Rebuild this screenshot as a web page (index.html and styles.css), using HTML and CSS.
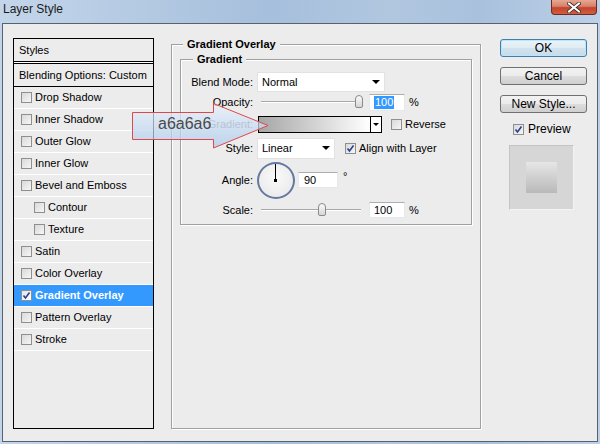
FILE: index.html
```html
<!DOCTYPE html>
<html lang="en">
<head>
    <meta charset="UTF-8">
    <title>Layer Style</title>
    <link rel="stylesheet" href="styles.css">
</head>
<body>
<div class="window">
    <div class="titlebar">
        <span class="title">Layer Style</span>
        <span class="close">
            <svg width="14" height="11" viewBox="0 0 14 11">
                <path d="M2,1.5 L12,9.5 M12,1.5 L2,9.5" stroke="#3a2a2a" stroke-width="3.6" stroke-linecap="square"/>
                <path d="M2,1.5 L12,9.5 M12,1.5 L2,9.5" stroke="#ffffff" stroke-width="2" stroke-linecap="square"/>
            </svg>
        </span>
    </div>

    <div class="client">
        <div class="styles-panel">
            <div class="panel-head">Styles</div>
            <div class="panel-blend">Blending Options: Custom</div>
            <div class="style-row"><span class="check"></span><span class="row-label">Drop Shadow</span></div>
            <div class="style-row"><span class="check"></span><span class="row-label">Inner Shadow</span></div>
            <div class="style-row"><span class="check"></span><span class="row-label">Outer Glow</span></div>
            <div class="style-row"><span class="check"></span><span class="row-label">Inner Glow</span></div>
            <div class="style-row"><span class="check"></span><span class="row-label">Bevel and Emboss</span></div>
            <div class="style-row sub"><span class="check"></span><span class="row-label">Contour</span></div>
            <div class="style-row sub"><span class="check"></span><span class="row-label">Texture</span></div>
            <div class="style-row"><span class="check"></span><span class="row-label">Satin</span></div>
            <div class="style-row"><span class="check"></span><span class="row-label">Color Overlay</span></div>
            <div class="style-row selected"><span class="check on"><svg width="9" height="9" viewBox="0 0 9 9"><path d="M1.5,4.5 L3.5,7 L7.5,1.5" fill="none" stroke="#2b3f8c" stroke-width="1.6"/></svg></span><span class="row-label">Gradient Overlay</span></div>
            <div class="style-row"><span class="check"></span><span class="row-label">Pattern Overlay</span></div>
            <div class="style-row"><span class="check"></span><span class="row-label">Stroke</span></div>
        </div>

        <div class="group group-outer">
            <div class="group-title">Gradient Overlay</div>
            <div class="group group-inner">
                <div class="group-title">Gradient</div>
                <div class="fields">
                    <div class="field field-blend">
                        <span class="field-label">Blend Mode:</span>
                        <div class="select select-blend">Normal<span class="caret"></span></div>
                    </div>
                    <div class="field field-slim">
                        <span class="field-label">Opacity:</span>
                        <div class="slider"><span class="thumb" style="left: 94px"></span></div>
                        <div class="textbox textbox-num"><span class="sel">100</span></div>
                        <span class="unit">%</span>
                    </div>
                    <div class="field field-wide">
                        <span class="field-label dim">Gradient:</span>
                        <div class="swatch"><span class="ramp"></span><span class="swatch-arrow"><span class="caret"></span></span></div>
                        <span class="check check-reverse"></span>
                        <span class="check-text">Reverse</span>
                    </div>
                    <div class="field field-wide">
                        <span class="field-label">Style:</span>
                        <div class="select select-style">Linear<span class="caret"></span></div>
                        <span class="check check-align"><svg width="9" height="9" viewBox="0 0 9 9"><path d="M1.5,4.5 L3.5,7 L7.5,1.5" fill="none" stroke="#2b3f8c" stroke-width="1.6"/></svg></span>
                        <span class="check-text">Align with Layer</span>
                    </div>
                    <div class="field field-angle">
                        <span class="field-label">Angle:</span>
                        <div class="dial"><span class="dial-hand"></span><span class="dial-dot"></span></div>
                        <div class="textbox textbox-angle">90</div>
                        <span class="degree">°</span>
                    </div>
                    <div class="field field-slim">
                        <span class="field-label">Scale:</span>
                        <div class="slider"><span class="thumb" style="left: 57px"></span></div>
                        <div class="textbox textbox-num">100</div>
                        <span class="unit">%</span>
                    </div>
                </div>
            </div>
        </div>

        <div class="actions">
            <button class="btn btn-default">OK</button>
            <button class="btn">Cancel</button>
            <button class="btn">New Style...</button>
            <div class="preview-toggle">
                <span class="check"><svg width="9" height="9" viewBox="0 0 9 9"><path d="M1.5,4.5 L3.5,7 L7.5,1.5" fill="none" stroke="#2b3f8c" stroke-width="1.6"/></svg></span>
                <span>Preview</span>
            </div>
            <div class="preview-box"><span class="preview-square"></span></div>
        </div>

        <!-- annotation arrow laid over the dialog -->
        <svg class="callout" width="140" height="48" viewBox="0 0 140 48">
            <defs>
                <linearGradient id="calloutFill" x1="0" y1="0" x2="0" y2="1">
                    <stop offset="0" stop-color="#eaf2fc"/>
                    <stop offset="1" stop-color="#a9c8ec"/>
                </linearGradient>
            </defs>
            <path d="M1.5,10.5 L82.5,10.5 L82.5,1.5 L137,23.5 L82.5,46 L82.5,37.5 L1.5,37.5 Z" fill="url(#calloutFill)" fill-opacity="0.72" stroke="#e04848" stroke-width="1"/>
            <text x="27" y="27" class="callout-text">a6a6a6</text>
        </svg>
    </div>
</div>
</body>
</html>
```

FILE: styles.css
```css
* {
    box-sizing: border-box;
}
body {
    margin: 0;
    font-family: "Liberation Sans", Arial, sans-serif;
    font-size: 11px;
    color: #000;
}
.window {
    width: 600px;
    height: 444px;
    display: flex;
    flex-direction: column;
    background: linear-gradient(to right, #c3d5ea 0%, #b3c9e2 25%, #a6bfdc 45%, #b1c7e0 65%, #a9c1dd 80%, #bcd0e7 100%);
}
.titlebar {
    height: 23px;
    display: flex;
    align-items: flex-start;
    padding-left: 3px;
}
.title {
    font-size: 12px;
    line-height: 18px;
    color: #1b1b1b;
}
.close {
    margin-left: auto;
    margin-right: 3px;
    width: 46px;
    height: 15px;
    display: flex;
    align-items: center;
    justify-content: center;
    border: 1px solid #6e2b22;
    border-top: none;
    border-radius: 0 0 4px 4px;
    background: linear-gradient(#e6a893 0%, #d8806a 45%, #c4432c 55%, #d0603f 100%);
}
.client {
    flex: 1;
    margin: 0 2px 2px 2px;
    border: 1px solid #58626e;
    background: #ececec;
    display: flex;
    align-items: flex-start;
    padding: 14px 0 0 10px;
    position: relative;
}

/* left list */
.styles-panel {
    width: 141px;
    height: 391px;
    border: 1px solid #000;
}
.panel-head {
    height: 23px;
    padding-left: 5px;
    line-height: 22px;
    border-bottom: 1px solid #000;
    box-shadow: 0 1px 0 #fff;
}
.panel-blend {
    margin-top: 1px;
    height: 24px;
    line-height: 22px;
    padding-left: 5px;
    border-top: 1px solid #000;
    border-bottom: 1px solid #000;
}
.style-row {
    height: 22px;
    display: flex;
    align-items: center;
    padding-left: 7px;
    border-bottom: 1px solid #fff;
}
.row-label {
    margin-bottom: 2px;
}
.style-row.sub {
    padding-left: 20px;
}
.style-row.selected {
    background: #3399ff;
    color: #fff;
    font-weight: bold;
}
.check {
    width: 11px;
    height: 11px;
    border: 1px solid #8e8f8f;
    background: linear-gradient(135deg, #d9d9d9, #f6f6f6);
    margin-right: 3px;
    display: flex;
    align-items: center;
    justify-content: center;
    flex: none;
}
.check.on,
.selected .check {
    background: linear-gradient(135deg, #e4e4e4, #ffffff);
}

/* group boxes */
.group {
    border: 1px solid #a0a0a0;
    box-shadow: 1px 1px 0 #fff, inset 1px 1px 0 #fff;
}
.group-outer {
    width: 310px;
    height: 385px;
    margin: 6px 0 0 17px;
}
.group-inner {
    height: 166px;
    margin: 8px 8px 0 8px;
}
.group-title {
    width: fit-content;
    margin: -7px 0 0 11px;
    padding: 0 4px;
    background: #ececec;
    font-weight: bold;
    line-height: 13px;
}
.group-inner .group-title {
    margin-left: 12px;
}
.fields {
    padding-top: 5px;
}
.field {
    display: flex;
    align-items: center;
    padding-left: 2px;
}
.field-blend { height: 21px; }
.field-slim { height: 20px; }
.field-wide { height: 24px; }
.field-angle { height: 40px; }
.field-label {
    width: 70px;
    margin-right: 4px;
    text-align: right;
}
.field-label.dim {
    color: #7c7c7c;
}
.select {
    height: 21px;
    background: #fff;
    border: 1px solid #e2e2e2;
    padding-left: 4px;
    display: flex;
    align-items: center;
}
.select-blend {
    width: 128px;
    height: 20px;
}
.select-style {
    width: 78px;
}
.caret {
    width: 0;
    height: 0;
    border-left: 4px solid transparent;
    border-right: 4px solid transparent;
    border-top: 4px solid #000;
    margin-left: auto;
    margin-right: 4px;
}
.slider {
    width: 100px;
    height: 14px;
    margin-left: 4px;
    position: relative;
    background: linear-gradient(transparent 6px, #a8a8a8 6px, #a8a8a8 7px, #fff 7px, #fff 8px, transparent 8px);
}
.thumb {
    position: absolute;
    top: 0;
    width: 8px;
    height: 13px;
    border: 1px solid #8a8a8a;
    border-radius: 4px 4px 2px 2px;
    background: linear-gradient(#fafafa, #d6d6d6);
}
.textbox {
    height: 17px;
    background: #fff;
    border: 1px solid #e3e9ef;
    border-top-color: #abadb3;
    display: flex;
    align-items: center;
}
.textbox-num {
    width: 36px;
    margin-left: 8px;
    padding-left: 4px;
}
.field-slim:last-child .textbox-num {
    height: 16px;
}
.sel {
    background: #3399ff;
    color: #fff;
    padding: 0 1px;
    line-height: 13px;
}
.unit {
    margin-left: 4px;
}
.swatch {
    width: 124px;
    height: 17px;
    margin-left: 1px;
    border: 1px solid #000;
    display: flex;
}
.ramp {
    flex: 1;
    background: linear-gradient(to right, #a6a6a6, #ffffff);
}
.swatch-arrow {
    width: 11px;
    border-left: 1px solid #000;
    background: #fff;
    display: flex;
    align-items: center;
}
.swatch-arrow .caret {
    border-width: 3px;
    border-top-width: 3px;
    margin: 0 auto;
}
.check-reverse {
    margin-left: 9px;
}
.check-align {
    margin-left: 10px;
}
.dial {
    width: 38px;
    height: 37px;
    border: 2px solid #6677a0;
    border-radius: 50%;
    background: radial-gradient(circle at 50% 40%, #fafafa, #e6e6e6);
    position: relative;
}
.dial-hand {
    position: absolute;
    left: 16px;
    top: 0;
    width: 1px;
    height: 17px;
    background: #000;
}
.dial-dot {
    position: absolute;
    left: 15px;
    top: 15px;
    width: 3px;
    height: 3px;
    background: #000;
}
.textbox-angle {
    width: 40px;
    height: 16px;
    margin-left: 3px;
    padding-left: 5px;
}
.degree {
    margin-left: 5px;
    margin-top: -8px;
}

/* right column */
.actions {
    width: 87px;
    margin: 1px 0 0 19px;
    display: flex;
    flex-direction: column;
}
.btn {
    width: 87px;
    height: 18px;
    margin-bottom: 10px;
    padding: 0;
    font-family: "Liberation Sans", Arial, sans-serif;
    font-size: 12px;
    color: #000;
    border: 1px solid #707070;
    border-radius: 3px;
    background: linear-gradient(#f2f2f2 0%, #ebebeb 50%, #dddddd 51%, #cfcfcf 100%);
}
.btn-default {
    border-color: #3c7fb1;
    box-shadow: inset 0 0 0 1px #bfe4f7;
    background: linear-gradient(#eaf3f9 0%, #dfecf5 50%, #d2e3ef 51%, #c6dbea 100%);
}
.preview-toggle {
    height: 16px;
    margin: -2px 0 0 13px;
    display: flex;
    align-items: center;
    font-size: 12px;
}
.preview-toggle .check {
    margin-right: 4px;
}
.preview-box {
    width: 65px;
    height: 65px;
    margin: 8px 0 0 9px;
    background: #d6d6d6;
    border: 1px solid #c4c4c4;
    border-right-color: #f4f4f4;
    border-bottom-color: #f4f4f4;
    display: flex;
    align-items: center;
    justify-content: center;
}
.preview-square {
    width: 31px;
    height: 31px;
    background: linear-gradient(#e6e6e6, #b9b9b9);
}

/* annotation */
.callout {
    position: absolute;
    left: 128px;
    top: 78px;
}
.callout-text {
    font-family: "Liberation Sans", Arial, sans-serif;
    font-size: 16px;
    fill: #4a4a4a;
}
```
